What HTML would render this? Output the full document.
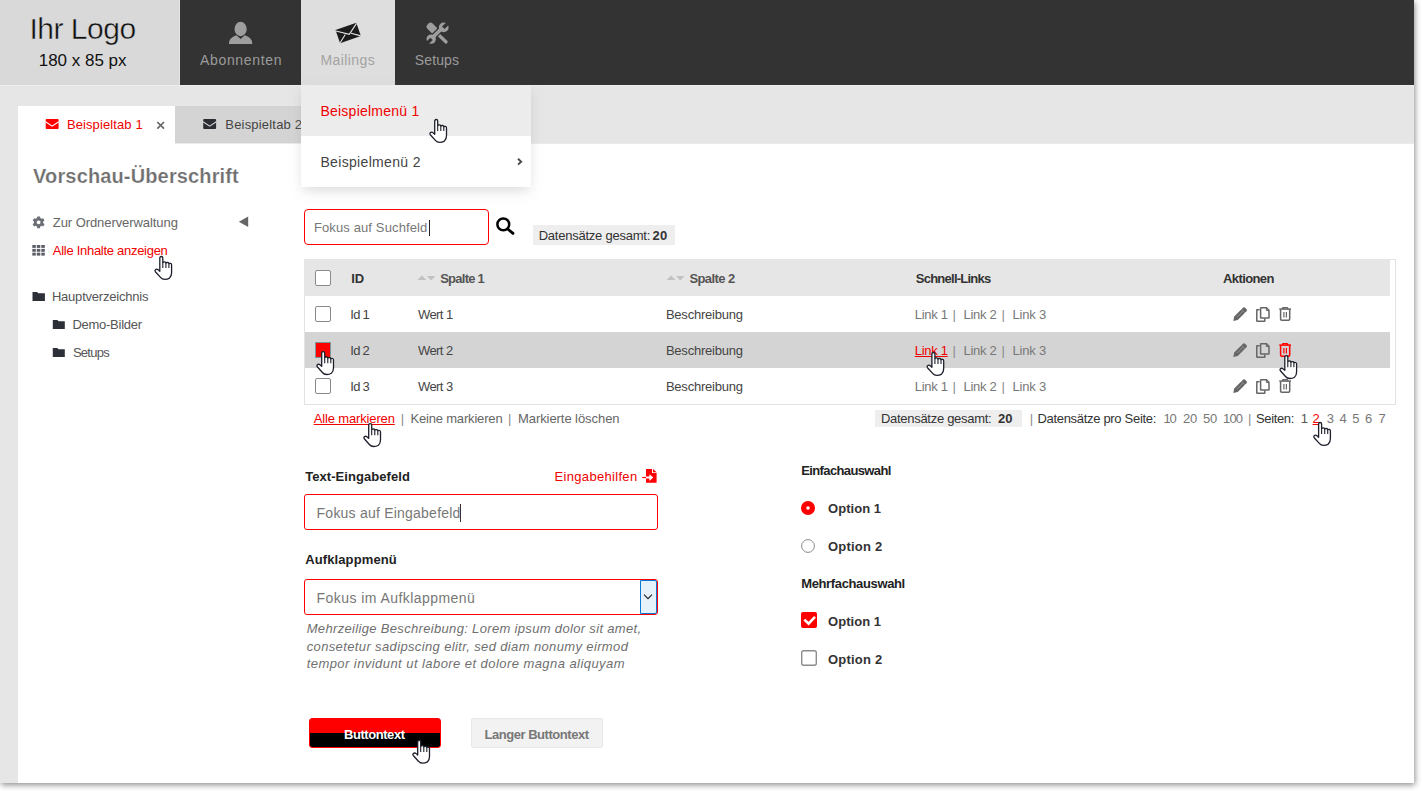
<!DOCTYPE html>
<html><head><meta charset="utf-8"><title>UI</title>
<style>
html,body{margin:0;padding:0;}
body{width:1422px;height:791px;overflow:hidden;background:#fff;position:relative;font-family:"Liberation Sans",sans-serif;}
.t{position:absolute;line-height:1;white-space:pre;font-family:"Liberation Sans",sans-serif;}
.a{position:absolute;}
svg.a{overflow:visible;}

</style></head>
<body>
<!-- page frame -->
<div class="a" style="left:0;top:0;width:1414px;height:783px;background:#e6e6e6;box-shadow:1px 2px 6px rgba(0,0,0,0.45);"></div>
<!-- header -->
<div class="a" style="left:0;top:0;width:1414px;height:85px;background:#333;"></div>
<div class="a" style="left:0;top:85px;width:1414px;height:1px;background:#ededed;"></div>
<div class="a" style="left:0;top:0;width:179px;height:85px;background:#d9d9d9;"></div>
<div class="a" style="left:179px;top:0;width:1px;height:85px;background:#e4e4e4;"></div>
<div class="a" style="left:301px;top:0;width:94px;height:85px;background:#dedede;"></div>
<!-- user icon -->
<svg class="a" style="left:0;top:0" width="1" height="1">
  <ellipse cx="240.6" cy="29" rx="6.1" ry="7.2" fill="#9e9e9e"/>
  <path d="M229,44 L229,42.5 Q229.5,38 234.5,36 L236.5,35.3 L240.6,39 L244.7,35.3 L246.7,36 Q251.7,38 252.2,42.5 L252.2,44 Z" fill="#9e9e9e"/>
</svg>
<!-- envelope rotated -->
<svg class="a" style="left:0;top:0" width="1" height="1">
  <g transform="translate(348.2,33) rotate(-19)">
    <rect x="-11" y="-7" width="22" height="14" fill="#1c1c1c"/>
    <path d="M-11,-6 L0.6,1.6 L11,-6.4" stroke="#e6e6e6" stroke-width="1.1" fill="none"/>
    <path d="M-11,6.8 L-3.2,0.4 M11,6.8 L2.6,1.2" stroke="#e6e6e6" stroke-width="1.1" fill="none"/>
  </g>
</svg>
<!-- tools icon -->
<svg class="a" style="left:0;top:0" width="1" height="1">
  <g transform="translate(426.3,22.6)" fill="#9e9e9e">
    <line x1="9" y1="9" x2="19.8" y2="19.4" stroke="#9e9e9e" stroke-width="3.2" stroke-linecap="round"/>
    <rect x="-5.6" y="-3.7" width="11.2" height="7.4" rx="2.6" transform="translate(5.6,5.5) rotate(45)"/>
    <line x1="3.6" y1="17.4" x2="17.8" y2="3.6" stroke="#333" stroke-width="6"/>
    <line x1="4.8" y1="16.3" x2="16.8" y2="4.6" stroke="#9e9e9e" stroke-width="3.6"/>
    <circle cx="17.4" cy="4.8" r="4.9"/>
    <circle cx="4.9" cy="16.5" r="4.7"/>
    <rect x="-1.8" y="-4" width="3.6" height="8" transform="translate(19.8,2.4) rotate(45)" fill="#333"/>
    <rect x="-1.7" y="-4" width="3.4" height="8" transform="translate(2.4,19.1) rotate(45)" fill="#333"/>
  </g>
</svg>
<!-- tab bar -->
<div class="a" style="left:18px;top:144px;width:1396px;height:639px;background:#fff;"></div>
<div class="a" style="left:174px;top:143px;width:1240px;height:1px;background:#ebebeb;"></div>
<div class="a" style="left:18px;top:106px;width:157px;height:38px;background:#fff;"></div>
<div class="a" style="left:175px;top:106px;width:140px;height:37px;background:#d4d4d4;"></div>
<!-- tab envelopes -->
<svg class="a" style="left:0;top:0" width="1" height="1">
  <rect x="45.7" y="119.1" width="12.9" height="9.8" rx="1" fill="#f00"/>
  <path d="M45.5,121.8 L52.15,126.2 L58.8,121.8" stroke="#fff" stroke-width="1.1" fill="none"/>
  <rect x="203.2" y="119.1" width="12.9" height="9.8" rx="1" fill="#2b2d33"/>
  <path d="M203,121.8 L209.65,126.2 L216.3,121.8" stroke="#d4d4d4" stroke-width="1.1" fill="none"/>
  <path d="M157.3,122 L164,128.6 M164,122 L157.3,128.6" stroke="#666" stroke-width="1.7"/>
</svg>
<!-- sidebar icons -->
<svg class="a" style="left:0;top:0" width="1" height="1">
  <g transform="translate(38.6,222.3)" fill="#6c6f76">
    <path d="M-1.3,-5.9 L1.3,-5.9 L1.7,-4.2 L3,-3.5 L4.6,-4.1 L5.9,-1.9 L4.6,-0.7 L4.6,0.7 L5.9,1.9 L4.6,4.1 L3,3.5 L1.7,4.2 L1.3,5.9 L-1.3,5.9 L-1.7,4.2 L-3,3.5 L-4.6,4.1 L-5.9,1.9 L-4.6,0.7 L-4.6,-0.7 L-5.9,-1.9 L-4.6,-4.1 L-3,-3.5 L-1.7,-4.2 Z M0,-1.9 A1.9,1.9 0 1,0 0.01,-1.9 Z" fill-rule="evenodd"/>
  </g>
  <path d="M248.2,216.6 L248.2,226.9 L238.9,221.7 Z" fill="#666"/>
  <g fill="#5b5e66"><rect x="32.3" y="245" width="3.5" height="2.9"/><rect x="36.8" y="245" width="3.5" height="2.9"/><rect x="41.3" y="245" width="3.5" height="2.9"/><rect x="32.3" y="248.9" width="3.5" height="2.9"/><rect x="36.8" y="248.9" width="3.5" height="2.9"/><rect x="41.3" y="248.9" width="3.5" height="2.9"/><rect x="32.3" y="252.7" width="3.5" height="2.9"/><rect x="36.8" y="252.7" width="3.5" height="2.9"/><rect x="41.3" y="252.7" width="3.5" height="2.9"/></g>
  <g fill="#2e3038">
    <path d="M32.5,292 L37,292 L38.3,293.2 L44.9,293.2 L44.9,301 L32.5,301 Z"/>
    <path d="M52.8,320 L57.3,320 L58.6,321.2 L64.8,321.2 L64.8,329 L52.8,329 Z"/>
    <path d="M52.8,348 L57.3,348 L58.6,349.2 L64.8,349.2 L64.8,357 L52.8,357 Z"/>
  </g>
</svg>
<!-- dropdown -->
<div class="a" style="left:301px;top:85px;width:230px;height:102px;background:#fff;box-shadow:0 5px 12px -2px rgba(140,140,140,0.34);z-index:20;"></div>
<div class="a" style="left:301px;top:85px;width:230px;height:51px;background:#ececec;z-index:21;"></div>
<svg class="a" style="left:0;top:0;z-index:22" width="1" height="1">
  <path d="M518,158.8 L521.2,161.7 L518,164.6" stroke="#4a4a4a" stroke-width="1.9" fill="none"/>
</svg>
<!-- search -->
<div class="a" style="left:304px;top:209px;width:183px;height:34px;border:1px solid #f00;border-radius:4px;background:#fff;"></div>
<div class="a" style="left:429px;top:220px;width:1px;height:16px;background:#222;"></div>
<svg class="a" style="left:0;top:0" width="1" height="1">
  <circle cx="503.3" cy="224.4" r="5.9" stroke="#000" stroke-width="2.5" fill="none"/>
  <line x1="508" y1="229.2" x2="513" y2="233.4" stroke="#000" stroke-width="2.8" stroke-linecap="round"/>
</svg>
<div class="a" style="left:533px;top:225px;width:142px;height:20px;background:#eeeeee;"></div>
<!-- table -->
<div class="a" style="left:304px;top:259px;width:1090px;height:144px;border:1px solid #e3e3e3;"></div>
<div class="a" style="left:304px;top:259px;width:1086px;height:37px;background:#e6e6e6;"></div>
<div class="a" style="left:305px;top:332px;width:1085px;height:36px;background:#d4d4d4;"></div>
<div class="a" style="left:315px;top:270px;width:14px;height:14px;border:1px solid #8a8a8a;border-radius:2px;background:#fff;"></div>
<div class="a" style="left:315px;top:306px;width:14px;height:14px;border:1px solid #8a8a8a;border-radius:2px;background:#fff;"></div>
<div class="a" style="left:315px;top:342px;width:14px;height:14px;border:1px solid #7f9797;background:#f00;"></div>
<div class="a" style="left:315px;top:378px;width:14px;height:14px;border:1px solid #8a8a8a;border-radius:2px;background:#fff;"></div>
<svg class="a" style="left:0;top:0" width="1" height="1">
  <g fill="#c2c2c2">
    <path d="M417.4,280.1 L426.4,280.1 L421.9,275.6 Z"/><path d="M426.8,276 L435.4,276 L431.1,280.6 Z"/>
    <path d="M666.6,280.1 L675.6,280.1 L671.1,275.6 Z"/><path d="M676,276 L684.6,276 L680.3,280.6 Z"/>
  </g>
</svg>
<!-- action icons -->
<svg class="a" style="left:0;top:0" width="1" height="1">
  
  <g transform="translate(1239.8,314.4)" ><g>
      <g transform="rotate(-45)">
        <path d="M-9.2,0 L-5.4,-2.5 L7,-2.5 Q8.4,-2.5 8.4,-1.2 L8.4,1.2 Q8.4,2.5 7,2.5 L-5.4,2.5 Z" fill="#666"/>
        <line x1="-3.6" y1="0" x2="4" y2="0" stroke="#d8d8d8" stroke-width="0.6" opacity="0.6"/>
        <line x1="4.6" y1="-2.3" x2="4.6" y2="2.3" stroke="#d8d8d8" stroke-width="0.6" opacity="0.6"/>
      </g>
    </g></g><g transform="translate(1239.8,350.4)" ><g>
      <g transform="rotate(-45)">
        <path d="M-9.2,0 L-5.4,-2.5 L7,-2.5 Q8.4,-2.5 8.4,-1.2 L8.4,1.2 Q8.4,2.5 7,2.5 L-5.4,2.5 Z" fill="#666"/>
        <line x1="-3.6" y1="0" x2="4" y2="0" stroke="#d8d8d8" stroke-width="0.6" opacity="0.6"/>
        <line x1="4.6" y1="-2.3" x2="4.6" y2="2.3" stroke="#d8d8d8" stroke-width="0.6" opacity="0.6"/>
      </g>
    </g></g><g transform="translate(1239.8,386.4)" ><g>
      <g transform="rotate(-45)">
        <path d="M-9.2,0 L-5.4,-2.5 L7,-2.5 Q8.4,-2.5 8.4,-1.2 L8.4,1.2 Q8.4,2.5 7,2.5 L-5.4,2.5 Z" fill="#666"/>
        <line x1="-3.6" y1="0" x2="4" y2="0" stroke="#d8d8d8" stroke-width="0.6" opacity="0.6"/>
        <line x1="4.6" y1="-2.3" x2="4.6" y2="2.3" stroke="#d8d8d8" stroke-width="0.6" opacity="0.6"/>
      </g>
    </g></g>
  <g transform="translate(1256,307.1)" ><g fill="none" stroke="#666" stroke-width="1.5">
      <path d="M3.6,2.6 L1,2.6 Q0.8,2.6 0.8,3 L0.8,14 Q0.8,14.2 1.2,14.2 L8.5,14.2 Q8.8,14.2 8.8,13.8 L8.8,11.3"/>
      <path d="M4.6,1 Q4.6,0.7 5,0.7 L10.5,0.7 L13,3.2 L13,10.6 Q13,11 12.6,11 L5,11 Q4.6,11 4.6,10.6 Z"/>
      <path d="M10.3,0.9 L10.3,3.4 L12.8,3.4" stroke-width="1"/>
    </g></g><g transform="translate(1256,343.1)" ><g fill="none" stroke="#666" stroke-width="1.5">
      <path d="M3.6,2.6 L1,2.6 Q0.8,2.6 0.8,3 L0.8,14 Q0.8,14.2 1.2,14.2 L8.5,14.2 Q8.8,14.2 8.8,13.8 L8.8,11.3"/>
      <path d="M4.6,1 Q4.6,0.7 5,0.7 L10.5,0.7 L13,3.2 L13,10.6 Q13,11 12.6,11 L5,11 Q4.6,11 4.6,10.6 Z"/>
      <path d="M10.3,0.9 L10.3,3.4 L12.8,3.4" stroke-width="1"/>
    </g></g><g transform="translate(1256,379.1)" ><g fill="none" stroke="#666" stroke-width="1.5">
      <path d="M3.6,2.6 L1,2.6 Q0.8,2.6 0.8,3 L0.8,14 Q0.8,14.2 1.2,14.2 L8.5,14.2 Q8.8,14.2 8.8,13.8 L8.8,11.3"/>
      <path d="M4.6,1 Q4.6,0.7 5,0.7 L10.5,0.7 L13,3.2 L13,10.6 Q13,11 12.6,11 L5,11 Q4.6,11 4.6,10.6 Z"/>
      <path d="M10.3,0.9 L10.3,3.4 L12.8,3.4" stroke-width="1"/>
    </g></g>
  <g transform="translate(1279,306.5)" stroke="#666"><g fill="none" stroke-width="1.5">
      <path d="M0.3,2.6 L12,2.6"/>
      <path d="M3.6,2.4 L3.6,1.9 Q3.6,1.2 4.4,1.2 L7.9,1.2 Q8.7,1.2 8.7,1.9 L8.7,2.4"/>
      <path d="M1.6,2.8 L1.6,12.6 Q1.6,13.8 2.8,13.8 L9.5,13.8 Q10.7,13.8 10.7,12.6 L10.7,2.8"/>
      <path d="M4.9,5.5 L4.9,11 M7.4,5.5 L7.4,11" stroke-width="1.2"/>
    </g></g><g transform="translate(1279,342.5)" stroke="#f00"><g fill="none" stroke-width="1.5">
      <path d="M0.3,2.6 L12,2.6"/>
      <path d="M3.6,2.4 L3.6,1.9 Q3.6,1.2 4.4,1.2 L7.9,1.2 Q8.7,1.2 8.7,1.9 L8.7,2.4"/>
      <path d="M1.6,2.8 L1.6,12.6 Q1.6,13.8 2.8,13.8 L9.5,13.8 Q10.7,13.8 10.7,12.6 L10.7,2.8"/>
      <path d="M4.9,5.5 L4.9,11 M7.4,5.5 L7.4,11" stroke-width="1.2"/>
    </g></g><g transform="translate(1279,378.5)" stroke="#666"><g fill="none" stroke-width="1.5">
      <path d="M0.3,2.6 L12,2.6"/>
      <path d="M3.6,2.4 L3.6,1.9 Q3.6,1.2 4.4,1.2 L7.9,1.2 Q8.7,1.2 8.7,1.9 L8.7,2.4"/>
      <path d="M1.6,2.8 L1.6,12.6 Q1.6,13.8 2.8,13.8 L9.5,13.8 Q10.7,13.8 10.7,12.6 L10.7,2.8"/>
      <path d="M4.9,5.5 L4.9,11 M7.4,5.5 L7.4,11" stroke-width="1.2"/>
    </g></g>
</svg>
<div class="a" style="left:875px;top:410px;width:147px;height:17px;background:#eeeeee;"></div>
<!-- form -->
<svg class="a" style="left:0;top:0" width="1" height="1">
  <path d="M646,468.9 L652,468.9 L652,473.1 L656.6,473.1 L656.6,482.7 L646,482.7 Z" fill="#f00"/>
  <path d="M653,468.9 L656.6,472.2 L653,472.2 Z" fill="#f00"/>
  <line x1="642.3" y1="477.5" x2="646" y2="477.5" stroke="#f00" stroke-width="1.2"/>
  <path d="M646,476.6 L649.4,476.6 L649.4,474.2 L653.3,477.6 L649.4,481 L649.4,478.5 L646,478.5 Z" fill="#fff"/>
</svg>
<div class="a" style="left:304px;top:494px;width:352px;height:34px;border:1px solid #f00;border-radius:3px;background:#fff;"></div>
<div class="a" style="left:460px;top:504px;width:1px;height:18px;background:#333;"></div>
<div class="a" style="left:304px;top:579px;width:352px;height:34px;border:1px solid #f00;border-radius:3px;background:#fff;"></div>
<div class="a" style="left:640px;top:580px;width:15px;height:32px;border:1px solid #0a78d6;border-radius:0 2px 2px 0;background:#e5f1fb;"></div>
<svg class="a" style="left:0;top:0" width="1" height="1">
  <path d="M644,594.6 L648,598.6 L652,594.6" stroke="#222" stroke-width="1.1" fill="none"/>
  <circle cx="808" cy="508" r="7" fill="#f00"/>
  <circle cx="808" cy="508" r="1.8" fill="#fff"/>
  <circle cx="808" cy="546" r="6.4" fill="#fff" stroke="#8c8c8c" stroke-width="1"/>
  <rect x="801" y="612" width="16" height="16" rx="2" fill="#f00"/>
  <path d="M804.3,619.6 L808.6,623.6 L815,616.8" stroke="#fff" stroke-width="2.6" fill="none"/>
  <rect x="801.7" y="650.7" width="14.6" height="14.6" rx="2" fill="#fff" stroke="#8c8c8c" stroke-width="1.4"/>
</svg>
<!-- buttons -->
<div class="a" style="left:309px;top:718px;width:130px;height:28px;border:1px solid #f00;border-radius:3px;background:linear-gradient(#f00 0,#f00 14px,#000 14px,#000 100%);"></div>
<div class="a" style="left:471px;top:718px;width:130px;height:28px;border:1px solid #e8e8e8;border-radius:2px;background:#f2f2f2;"></div>

<div class="t" style="left:29.40px;top:14.30px;font-size:30px;color:#111;letter-spacing:-0.485px;-webkit-text-stroke:0.45px #d9d9d9;">Ihr Logo</div>
<div class="t" style="left:38.70px;top:52.31px;font-size:17px;color:#111;letter-spacing:-0.010px;">180 x 85 px</div>
<div class="t" style="left:200.00px;top:52.85px;font-size:14px;color:#9b9b9b;letter-spacing:0.663px;">Abonnenten</div>
<div class="t" style="left:320.50px;top:52.85px;font-size:14px;color:#a3a3a3;letter-spacing:0.407px;">Mailings</div>
<div class="t" style="left:414.80px;top:52.85px;font-size:14px;color:#9b9b9b;letter-spacing:0.123px;">Setups</div>
<div class="t" style="left:66.90px;top:117.79px;font-size:13px;color:#f00000;letter-spacing:0.108px;">Beispieltab 1</div>
<div class="t" style="left:225.30px;top:117.79px;font-size:13px;color:#444;letter-spacing:0.191px;">Beispieltab 2</div>
<div class="t" style="left:33.10px;top:165.87px;font-size:20px;color:#6f6f6f;font-weight:bold;letter-spacing:0.140px;-webkit-text-stroke:0.2px #fff;">Vorschau-Überschrift</div>
<div class="t" style="left:52.80px;top:216.19px;font-size:13px;color:#666;letter-spacing:-0.069px;">Zur Ordnerverwaltung</div>
<div class="t" style="left:52.80px;top:243.59px;font-size:13px;color:#f00000;letter-spacing:-0.284px;">Alle Inhalte anzeigen</div>
<div class="t" style="left:51.90px;top:289.99px;font-size:13px;color:#555;letter-spacing:-0.208px;">Hauptverzeichnis</div>
<div class="t" style="left:72.40px;top:317.99px;font-size:13px;color:#555;letter-spacing:-0.261px;">Demo-Bilder</div>
<div class="t" style="left:72.90px;top:345.69px;font-size:13px;color:#555;letter-spacing:-0.715px;">Setups</div>
<div class="t" style="left:313.90px;top:221.09px;font-size:13px;color:#777;letter-spacing:0.126px;">Fokus auf Suchfeld</div>
<div class="t" style="left:538.70px;top:229.19px;font-size:13px;color:#333;letter-spacing:-0.236px;">Datensätze gesamt:</div>
<div class="t" style="left:652.50px;top:229.19px;font-size:13px;color:#333;font-weight:bold;letter-spacing:0.170px;">20</div>
<div class="t" style="left:351.25px;top:271.99px;font-size:13px;color:#333;font-weight:bold;letter-spacing:-0.212px;">ID</div>
<div class="t" style="left:440.20px;top:271.99px;font-size:13px;color:#555;font-weight:bold;letter-spacing:-0.746px;">Spalte 1</div>
<div class="t" style="left:689.40px;top:271.99px;font-size:13px;color:#555;font-weight:bold;letter-spacing:-0.575px;">Spalte 2</div>
<div class="t" style="left:915.80px;top:271.99px;font-size:13px;color:#333;font-weight:bold;letter-spacing:-0.757px;">Schnell-Links</div>
<div class="t" style="left:1223.00px;top:271.99px;font-size:13px;color:#333;font-weight:bold;letter-spacing:-0.596px;">Aktionen</div>
<div class="t" style="left:350.25px;top:307.79px;font-size:13px;color:#444;letter-spacing:-0.718px;">Id 1</div>
<div class="t" style="left:418.00px;top:307.79px;font-size:13px;color:#444;letter-spacing:-0.584px;">Wert 1</div>
<div class="t" style="left:665.90px;top:307.79px;font-size:13px;color:#444;letter-spacing:-0.215px;">Beschreibung</div>
<div class="t" style="left:914.80px;top:307.79px;font-size:13px;color:#777;letter-spacing:-0.292px;">Link 1</div>
<div class="t" style="left:952.50px;top:307.79px;font-size:13px;color:#8a8a8a;">|</div>
<div class="t" style="left:963.50px;top:307.79px;font-size:13px;color:#777;letter-spacing:-0.292px;">Link 2</div>
<div class="t" style="left:1001.50px;top:307.79px;font-size:13px;color:#8a8a8a;">|</div>
<div class="t" style="left:1012.40px;top:307.79px;font-size:13px;color:#777;letter-spacing:-0.172px;">Link 3</div>
<div class="t" style="left:350.25px;top:343.79px;font-size:13px;color:#444;letter-spacing:-0.718px;">Id 2</div>
<div class="t" style="left:418.00px;top:343.79px;font-size:13px;color:#444;letter-spacing:-0.584px;">Wert 2</div>
<div class="t" style="left:665.90px;top:343.79px;font-size:13px;color:#444;letter-spacing:-0.215px;">Beschreibung</div>
<div class="t" style="left:914.80px;top:343.79px;font-size:13px;color:#f00000;letter-spacing:-0.292px;text-decoration:underline;">Link 1</div>
<div class="t" style="left:952.50px;top:343.79px;font-size:13px;color:#8a8a8a;">|</div>
<div class="t" style="left:963.50px;top:343.79px;font-size:13px;color:#777;letter-spacing:-0.292px;">Link 2</div>
<div class="t" style="left:1001.50px;top:343.79px;font-size:13px;color:#8a8a8a;">|</div>
<div class="t" style="left:1012.40px;top:343.79px;font-size:13px;color:#777;letter-spacing:-0.172px;">Link 3</div>
<div class="t" style="left:350.25px;top:379.79px;font-size:13px;color:#444;letter-spacing:-0.718px;">Id 3</div>
<div class="t" style="left:418.00px;top:379.79px;font-size:13px;color:#444;letter-spacing:-0.584px;">Wert 3</div>
<div class="t" style="left:665.90px;top:379.79px;font-size:13px;color:#444;letter-spacing:-0.215px;">Beschreibung</div>
<div class="t" style="left:914.80px;top:379.79px;font-size:13px;color:#777;letter-spacing:-0.292px;">Link 1</div>
<div class="t" style="left:952.50px;top:379.79px;font-size:13px;color:#8a8a8a;">|</div>
<div class="t" style="left:963.50px;top:379.79px;font-size:13px;color:#777;letter-spacing:-0.292px;">Link 2</div>
<div class="t" style="left:1001.50px;top:379.79px;font-size:13px;color:#8a8a8a;">|</div>
<div class="t" style="left:1012.40px;top:379.79px;font-size:13px;color:#777;letter-spacing:-0.172px;">Link 3</div>
<div class="t" style="left:313.70px;top:411.99px;font-size:13px;color:#f00000;letter-spacing:-0.143px;text-decoration:underline;">Alle markieren</div>
<div class="t" style="left:400.70px;top:411.99px;font-size:13px;color:#8a8a8a;">|</div>
<div class="t" style="left:410.40px;top:411.99px;font-size:13px;color:#666;letter-spacing:-0.173px;">Keine markieren</div>
<div class="t" style="left:508.00px;top:411.99px;font-size:13px;color:#8a8a8a;">|</div>
<div class="t" style="left:518.00px;top:411.99px;font-size:13px;color:#666;letter-spacing:-0.067px;">Markierte löschen</div>
<div class="t" style="left:881.00px;top:411.99px;font-size:13px;color:#333;letter-spacing:-0.294px;">Datensätze gesamt:</div>
<div class="t" style="left:998.00px;top:411.99px;font-size:13px;color:#333;font-weight:bold;letter-spacing:0.070px;">20</div>
<div class="t" style="left:1029.70px;top:411.99px;font-size:13px;color:#8a8a8a;">|</div>
<div class="t" style="left:1037.40px;top:411.99px;font-size:13px;color:#333;letter-spacing:-0.305px;">Datensätze pro Seite:</div>
<div class="t" style="left:1163.60px;top:411.99px;font-size:13px;color:#777;letter-spacing:-1.230px;">10</div>
<div class="t" style="left:1183.00px;top:411.99px;font-size:13px;color:#777;letter-spacing:-0.230px;">20</div>
<div class="t" style="left:1203.00px;top:411.99px;font-size:13px;color:#777;letter-spacing:-0.230px;">50</div>
<div class="t" style="left:1223.00px;top:411.99px;font-size:13px;color:#777;letter-spacing:-0.830px;">100</div>
<div class="t" style="left:1248.00px;top:411.99px;font-size:13px;color:#8a8a8a;">|</div>
<div class="t" style="left:1256.00px;top:411.99px;font-size:13px;color:#333;letter-spacing:-0.360px;">Seiten:</div>
<div class="t" style="left:1300.70px;top:411.99px;font-size:13px;color:#555;">1</div>
<div class="t" style="left:1312.60px;top:411.99px;font-size:13px;color:#f00000;text-decoration:underline;">2</div>
<div class="t" style="left:1326.80px;top:411.99px;font-size:13px;color:#777;">3</div>
<div class="t" style="left:1339.50px;top:411.99px;font-size:13px;color:#777;">4</div>
<div class="t" style="left:1352.20px;top:411.99px;font-size:13px;color:#777;">5</div>
<div class="t" style="left:1365.00px;top:411.99px;font-size:13px;color:#777;">6</div>
<div class="t" style="left:1378.50px;top:411.99px;font-size:13px;color:#777;">7</div>
<div class="t" style="left:305.20px;top:469.99px;font-size:13px;color:#222;font-weight:bold;letter-spacing:0.058px;">Text-Eingabefeld</div>
<div class="t" style="left:554.60px;top:469.99px;font-size:13px;color:#f00000;letter-spacing:0.312px;">Eingabehilfen</div>
<div class="t" style="left:316.60px;top:505.95px;font-size:14px;color:#777;letter-spacing:0.223px;">Fokus auf Eingabefeld</div>
<div class="t" style="left:305.20px;top:552.79px;font-size:13px;color:#222;font-weight:bold;letter-spacing:0.114px;">Aufklappmenü</div>
<div class="t" style="left:316.60px;top:591.05px;font-size:14px;color:#777;letter-spacing:0.440px;">Fokus im Aufklappmenü</div>
<div class="t" style="left:306.70px;top:621.59px;font-size:13px;color:#6f6f6f;font-style:italic;letter-spacing:0.331px;">Mehrzeilige Beschreibung: Lorem ipsum dolor sit amet,</div>
<div class="t" style="left:306.70px;top:639.69px;font-size:13px;color:#6f6f6f;font-style:italic;letter-spacing:0.369px;">consetetur sadipscing elitr, sed diam nonumy eirmod</div>
<div class="t" style="left:306.70px;top:657.49px;font-size:13px;color:#6f6f6f;font-style:italic;letter-spacing:0.440px;">tempor invidunt ut labore et dolore magna aliquyam</div>
<div class="t" style="left:801.20px;top:463.89px;font-size:13px;color:#222;font-weight:bold;letter-spacing:-0.618px;">Einfachauswahl</div>
<div class="t" style="left:828.00px;top:501.79px;font-size:13px;color:#333;font-weight:bold;letter-spacing:0.045px;">Option 1</div>
<div class="t" style="left:828.00px;top:539.99px;font-size:13px;color:#333;font-weight:bold;letter-spacing:0.216px;">Option 2</div>
<div class="t" style="left:801.20px;top:576.99px;font-size:13px;color:#222;font-weight:bold;letter-spacing:-0.362px;">Mehrfachauswahl</div>
<div class="t" style="left:828.00px;top:614.99px;font-size:13px;color:#333;font-weight:bold;letter-spacing:0.045px;">Option 1</div>
<div class="t" style="left:828.00px;top:652.99px;font-size:13px;color:#333;font-weight:bold;letter-spacing:0.216px;">Option 2</div>
<div class="t" style="left:344.00px;top:727.69px;font-size:13px;color:#fff;font-weight:bold;letter-spacing:-0.440px;">Buttontext</div>
<div class="t" style="left:484.40px;top:727.69px;font-size:13px;color:#777;font-weight:bold;letter-spacing:-0.451px;">Langer Buttontext</div>
<div class="t" style="left:320.40px;top:104.15px;font-size:14px;color:#f00000;letter-spacing:0.243px;z-index:30;">Beispielmenü 1</div>
<div class="t" style="left:320.40px;top:154.85px;font-size:14px;color:#444;letter-spacing:0.336px;z-index:30;">Beispielmenü 2</div>
<svg class="a" style="left:0;top:0;z-index:60" width="1" height="1">
  
  <g transform="translate(429.1,119.1)" ><g>
      <path d="M5.6,15.2 L5.6,1.9 Q5.6,0.4 7.1,0.4 Q8.6,0.4 8.6,1.9 L8.6,6.4 Q9.4,5.6 10.6,5.8 Q11.6,5.9 11.7,6.9 Q12.4,6.2 13.5,6.4 Q14.6,6.6 14.7,7.6 Q15.4,7 16.4,7.3 Q17.4,7.6 17.4,8.8 L17.4,16.5 Q17.4,20.3 15.3,22 Q13.2,23.3 10.6,23.3 Q7.9,23.3 6.3,21.3 L1.2,15.6 Q0.3,14.5 1.2,13.6 Q2.4,12.6 3.8,13.5 Z" fill="#fff" stroke="#1d1f2b" stroke-width="1.3" stroke-linejoin="round"/>
      <path d="M8.6,6.4 L8.6,12 M11.7,6.9 L11.7,12 M14.7,7.6 L14.7,12" stroke="#1d1f2b" stroke-width="1.1" fill="none"/>
    </g></g>
  <g transform="translate(154.2,256.1)" ><g>
      <path d="M5.6,15.2 L5.6,1.9 Q5.6,0.4 7.1,0.4 Q8.6,0.4 8.6,1.9 L8.6,6.4 Q9.4,5.6 10.6,5.8 Q11.6,5.9 11.7,6.9 Q12.4,6.2 13.5,6.4 Q14.6,6.6 14.7,7.6 Q15.4,7 16.4,7.3 Q17.4,7.6 17.4,8.8 L17.4,16.5 Q17.4,20.3 15.3,22 Q13.2,23.3 10.6,23.3 Q7.9,23.3 6.3,21.3 L1.2,15.6 Q0.3,14.5 1.2,13.6 Q2.4,12.6 3.8,13.5 Z" fill="#fff" stroke="#1d1f2b" stroke-width="1.3" stroke-linejoin="round"/>
      <path d="M8.6,6.4 L8.6,12 M11.7,6.9 L11.7,12 M14.7,7.6 L14.7,12" stroke="#1d1f2b" stroke-width="1.1" fill="none"/>
    </g></g>
  <g transform="translate(316.1,351.2)" ><g>
      <path d="M5.6,15.2 L5.6,1.9 Q5.6,0.4 7.1,0.4 Q8.6,0.4 8.6,1.9 L8.6,6.4 Q9.4,5.6 10.6,5.8 Q11.6,5.9 11.7,6.9 Q12.4,6.2 13.5,6.4 Q14.6,6.6 14.7,7.6 Q15.4,7 16.4,7.3 Q17.4,7.6 17.4,8.8 L17.4,16.5 Q17.4,20.3 15.3,22 Q13.2,23.3 10.6,23.3 Q7.9,23.3 6.3,21.3 L1.2,15.6 Q0.3,14.5 1.2,13.6 Q2.4,12.6 3.8,13.5 Z" fill="#fff" stroke="#1d1f2b" stroke-width="1.3" stroke-linejoin="round"/>
      <path d="M8.6,6.4 L8.6,12 M11.7,6.9 L11.7,12 M14.7,7.6 L14.7,12" stroke="#1d1f2b" stroke-width="1.1" fill="none"/>
    </g></g>
  <g transform="translate(926.3,352.1)" ><g>
      <path d="M5.6,15.2 L5.6,1.9 Q5.6,0.4 7.1,0.4 Q8.6,0.4 8.6,1.9 L8.6,6.4 Q9.4,5.6 10.6,5.8 Q11.6,5.9 11.7,6.9 Q12.4,6.2 13.5,6.4 Q14.6,6.6 14.7,7.6 Q15.4,7 16.4,7.3 Q17.4,7.6 17.4,8.8 L17.4,16.5 Q17.4,20.3 15.3,22 Q13.2,23.3 10.6,23.3 Q7.9,23.3 6.3,21.3 L1.2,15.6 Q0.3,14.5 1.2,13.6 Q2.4,12.6 3.8,13.5 Z" fill="#fff" stroke="#1d1f2b" stroke-width="1.3" stroke-linejoin="round"/>
      <path d="M8.6,6.4 L8.6,12 M11.7,6.9 L11.7,12 M14.7,7.6 L14.7,12" stroke="#1d1f2b" stroke-width="1.1" fill="none"/>
    </g></g>
  <g transform="translate(1279.2,355.2)" ><g>
      <path d="M5.6,15.2 L5.6,1.9 Q5.6,0.4 7.1,0.4 Q8.6,0.4 8.6,1.9 L8.6,6.4 Q9.4,5.6 10.6,5.8 Q11.6,5.9 11.7,6.9 Q12.4,6.2 13.5,6.4 Q14.6,6.6 14.7,7.6 Q15.4,7 16.4,7.3 Q17.4,7.6 17.4,8.8 L17.4,16.5 Q17.4,20.3 15.3,22 Q13.2,23.3 10.6,23.3 Q7.9,23.3 6.3,21.3 L1.2,15.6 Q0.3,14.5 1.2,13.6 Q2.4,12.6 3.8,13.5 Z" fill="#fff" stroke="#1d1f2b" stroke-width="1.3" stroke-linejoin="round"/>
      <path d="M8.6,6.4 L8.6,12 M11.7,6.9 L11.7,12 M14.7,7.6 L14.7,12" stroke="#1d1f2b" stroke-width="1.1" fill="none"/>
    </g></g>
  <g transform="translate(363.1,423.2)" ><g>
      <path d="M5.6,15.2 L5.6,1.9 Q5.6,0.4 7.1,0.4 Q8.6,0.4 8.6,1.9 L8.6,6.4 Q9.4,5.6 10.6,5.8 Q11.6,5.9 11.7,6.9 Q12.4,6.2 13.5,6.4 Q14.6,6.6 14.7,7.6 Q15.4,7 16.4,7.3 Q17.4,7.6 17.4,8.8 L17.4,16.5 Q17.4,20.3 15.3,22 Q13.2,23.3 10.6,23.3 Q7.9,23.3 6.3,21.3 L1.2,15.6 Q0.3,14.5 1.2,13.6 Q2.4,12.6 3.8,13.5 Z" fill="#fff" stroke="#1d1f2b" stroke-width="1.3" stroke-linejoin="round"/>
      <path d="M8.6,6.4 L8.6,12 M11.7,6.9 L11.7,12 M14.7,7.6 L14.7,12" stroke="#1d1f2b" stroke-width="1.1" fill="none"/>
    </g></g>
  <g transform="translate(1313,422.1)" ><g>
      <path d="M5.6,15.2 L5.6,1.9 Q5.6,0.4 7.1,0.4 Q8.6,0.4 8.6,1.9 L8.6,6.4 Q9.4,5.6 10.6,5.8 Q11.6,5.9 11.7,6.9 Q12.4,6.2 13.5,6.4 Q14.6,6.6 14.7,7.6 Q15.4,7 16.4,7.3 Q17.4,7.6 17.4,8.8 L17.4,16.5 Q17.4,20.3 15.3,22 Q13.2,23.3 10.6,23.3 Q7.9,23.3 6.3,21.3 L1.2,15.6 Q0.3,14.5 1.2,13.6 Q2.4,12.6 3.8,13.5 Z" fill="#fff" stroke="#1d1f2b" stroke-width="1.3" stroke-linejoin="round"/>
      <path d="M8.6,6.4 L8.6,12 M11.7,6.9 L11.7,12 M14.7,7.6 L14.7,12" stroke="#1d1f2b" stroke-width="1.1" fill="none"/>
    </g></g>
  <g transform="translate(412.1,739.9)" ><g>
      <path d="M5.6,15.2 L5.6,1.9 Q5.6,0.4 7.1,0.4 Q8.6,0.4 8.6,1.9 L8.6,6.4 Q9.4,5.6 10.6,5.8 Q11.6,5.9 11.7,6.9 Q12.4,6.2 13.5,6.4 Q14.6,6.6 14.7,7.6 Q15.4,7 16.4,7.3 Q17.4,7.6 17.4,8.8 L17.4,16.5 Q17.4,20.3 15.3,22 Q13.2,23.3 10.6,23.3 Q7.9,23.3 6.3,21.3 L1.2,15.6 Q0.3,14.5 1.2,13.6 Q2.4,12.6 3.8,13.5 Z" fill="#fff" stroke="#1d1f2b" stroke-width="1.3" stroke-linejoin="round"/>
      <path d="M8.6,6.4 L8.6,12 M11.7,6.9 L11.7,12 M14.7,7.6 L14.7,12" stroke="#1d1f2b" stroke-width="1.1" fill="none"/>
    </g></g>
</svg>

</body></html>
